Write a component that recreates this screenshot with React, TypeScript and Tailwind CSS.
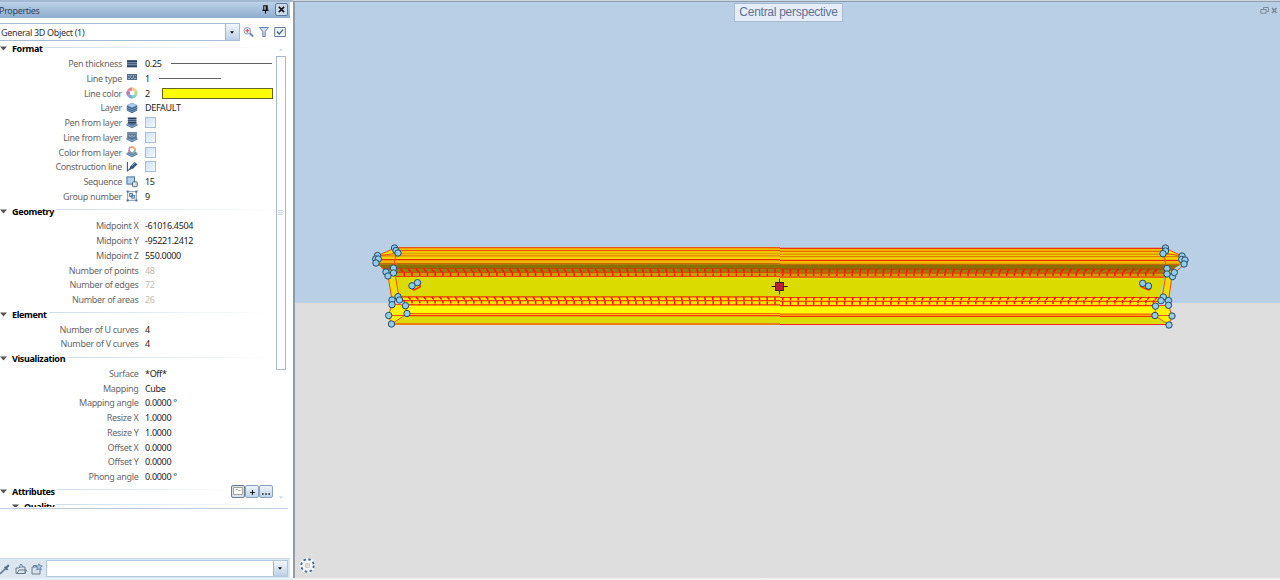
import React from "react";

type IconName =
  | "pen" | "type" | "wheel" | "layer" | "penLayer" | "lineLayer" | "colorLayer" | "construct" | "sequence" | "group";

type Row = {
  label: string;
  value?: string;
  icon?: IconName;
  kind?: "thick" | "thin" | "color" | "check" | "muted";
};

const format: Row[] = [
  { label: "Pen thickness", value: "0.25", icon: "pen", kind: "thick" },
  { label: "Line type", value: "1", icon: "type", kind: "thin" },
  { label: "Line color", value: "2", icon: "wheel", kind: "color" },
  { label: "Layer", value: "DEFAULT", icon: "layer" },
  { label: "Pen from layer", icon: "penLayer", kind: "check" },
  { label: "Line from layer", icon: "lineLayer", kind: "check" },
  { label: "Color from layer", icon: "colorLayer", kind: "check" },
  { label: "Construction line", icon: "construct", kind: "check" },
  { label: "Sequence", value: "15", icon: "sequence" },
  { label: "Group number", value: "9", icon: "group" },
];

const geometry: Row[] = [
  { label: "Midpoint X", value: "-61016.4504" },
  { label: "Midpoint Y", value: "-95221.2412" },
  { label: "Midpoint Z", value: "550.0000" },
  { label: "Number of points", value: "48", kind: "muted" },
  { label: "Number of edges", value: "72", kind: "muted" },
  { label: "Number of areas", value: "26", kind: "muted" },
];

const element: Row[] = [
  { label: "Number of U curves", value: "4" },
  { label: "Number of V curves", value: "4" },
];

const visualization: Row[] = [
  { label: "Surface", value: "*Off*" },
  { label: "Mapping", value: "Cube" },
  { label: "Mapping angle", value: "0.0000 °" },
  { label: "Resize X", value: "1.0000" },
  { label: "Resize Y", value: "1.0000" },
  { label: "Offset X", value: "0.0000" },
  { label: "Offset Y", value: "0.0000" },
  { label: "Phong angle", value: "0.0000 °" },
];

function LayerBase() {
  return (
    <>
      <path d="M.5 7 3 6H9l2.5 1V8.4L6 11.2.5 8.4Z" fill="#4f759f" />
      <path d="M1 7.4 6 9.6 11 7.4" fill="none" stroke="#a9c4e2" strokeWidth=".7" />
    </>
  );
}

function RowIcon({ name }: { name: IconName }) {
  return (
    <svg viewBox="0 0 12 12" className="h-3 w-3 shrink-0">
      {name === "pen" && (
        <>
          <rect x="1" y="2.2" width="10" height="7" fill="#8fa6c2" />
          <path d="M1 3.2h10M1 8.2h10" stroke="#2c4567" strokeWidth="2" />
          <path d="M1 5.7h10" stroke="#38557c" strokeWidth="1.3" />
        </>
      )}
      {name === "type" && (
        <>
          <rect x="1" y="2" width="10" height="6" fill="#526b90" />
          <path d="M2 3.6h1.5M4.5 3.6H6M7 3.6h1.2M9 3.6h1M2 6.4h2M5 6.4h2M8 6.4h2" stroke="#a9bdd8" strokeWidth=".9" />
          <path d="M4.2 4v2M7.4 4v2" stroke="#a9bdd6" strokeWidth=".7" />
        </>
      )}
      {name === "wheel" && (
        <>
          <g fill="none" strokeWidth="3.5">
            <path d="M6 2.1A3.9 3.9 0 0 1 9.4 4.05" stroke="#f0cf95" />
            <path d="M9.4 4.05A3.9 3.9 0 0 1 9.4 7.95" stroke="#b7dc91" />
            <path d="M9.4 7.95A3.9 3.9 0 0 1 6 9.9" stroke="#80d2c2" />
            <path d="M6 9.9A3.9 3.9 0 0 1 2.6 7.95" stroke="#8e9ddd" />
            <path d="M2.6 7.95A3.9 3.9 0 0 1 2.6 4.05" stroke="#b07bc6" />
            <path d="M2.6 4.05A3.9 3.9 0 0 1 6 2.1" stroke="#e58c9b" />
          </g>
          <circle cx="6.2" cy="6" r="2.2" fill="#fff" />
        </>
      )}
      {name === "layer" && (
        <>
          <path d="M.8 3.2 6 .8 11.2 3.2V8.5L6 11.2.8 8.5Z" fill="#41658f" />
          <path d="M.8 3.2 6 1 11.2 3.2 6 5.7Z" fill="#a9c9ec" />
          <path d="M1 5.4 6 7.7 11 5.4M1 7.6 6 9.8 11 7.6" fill="none" stroke="#86a9d0" strokeWidth=".7" />
        </>
      )}
      {name === "penLayer" && (
        <>
          <LayerBase />
          <rect x="2" y="1" width="8.4" height="5.5" fill="#8fa6c2" />
          <path d="M1.8 1.4h8.6M1.8 5.6h8.6" stroke="#253f5f" strokeWidth="1.7" />
          <path d="M1.8 3.6h8.6" stroke="#304d70" />
        </>
      )}
      {name === "lineLayer" && (
        <>
          <LayerBase />
          <rect x="1.2" y="1" width="9.6" height="6.8" fill="#5d7698" />
          <path d="M2 2.2h8M2.5 4.5h1.2v1.2h1.5V4.5h1.6v1.2h1.5V4.5h1" fill="none" stroke="#a9bcd6" strokeWidth=".7" />
        </>
      )}
      {name === "colorLayer" && (
        <>
          <LayerBase />
          <circle cx="6" cy="4" r="2.9" fill="#fff" stroke="#df8794" strokeWidth="1.5" />
          <path d="M6 1.1a2.9 2.9 0 0 1 2.9 2.9" fill="none" stroke="#dfba66" strokeWidth="1.5" />
          <path d="M8.9 4A2.9 2.9 0 0 1 6 6.9" fill="none" stroke="#81bd90" strokeWidth="1.5" />
          <path d="M6 6.9A2.9 2.9 0 0 1 3.1 4" fill="none" stroke="#a289cd" strokeWidth="1.5" />
        </>
      )}
      {name === "construct" && (
        <>
          <path d="M1.4 1v9.5M1 10 5.5 7" stroke="#43597a" strokeWidth="1.1" />
          <path d="M4.2 5.5 8.5 1 11.4 3.2 7 7.8 3.3 8.6Z" fill="#345684" />
          <path d="M6 5 9 2" stroke="#8eb4df" strokeWidth=".9" />
        </>
      )}
      {name === "sequence" && (
        <>
          <rect x=".9" y=".9" width="7.6" height="7.2" fill="#b4d2f0" stroke="#4c7199" />
          <rect x="6.5" y="5.8" width="4.7" height="4.9" rx=".8" fill="#dce2e8" stroke="#536a80" />
        </>
      )}
      {name === "group" && (
        <>
          <path d="M1.7 1.7h8.6v8.6H1.7Z" fill="none" stroke="#5b789d" strokeWidth=".8" />
          <path d="M.6.6h2v2h-2ZM9.4.6h2v2h-2ZM.6 9.4h2v2h-2ZM9.4 9.4h2v2h-2Z" fill="#506f98" />
          <path d="M3.5 3.5h3v3h-3ZM5.6 5.3h3v3h-3Z" fill="#bfd7ef" stroke="#3d5f8b" strokeWidth=".8" />
        </>
      )}
    </svg>
  );
}

function PropertyRow({ row }: { row: Row }) {
  return (
    <div className="flex h-[14.76px] shrink-0 items-center text-[#686868]">
      <span className={row.icon ? "w-[122px] text-right" : "w-[138.5px] text-right"}>{row.label}</span>
      {row.icon && <span className="ml-1 flex w-[12.5px]"><RowIcon name={row.icon} /></span>}
      {row.kind === "check" ? (
        <span className="ml-[6.5px] h-[11px] w-[11px] border border-[#a9bfd8] bg-linear-to-br from-[#d3e1f2] to-[#f2f8fe]" />
      ) : (
        <span className={row.kind === "muted" ? "ml-[6.5px] text-[#bcbcb6]" : "ml-[6.5px] text-[#222]"}>{row.value}</span>
      )}
      {row.kind === "thick" && <span className="mr-[2px] ml-[9px] h-px flex-1 bg-[#606060]" />}
      {row.kind === "thin" && <span className="ml-[9px] h-px w-[62px] bg-[#606060]" />}
      {row.kind === "color" && <span className="mr-[1px] ml-[12px] h-[11px] flex-1 border border-[#65652a] bg-[#ff0]" />}
    </div>
  );
}

function Heading({ title, children }: { title: string; children?: React.ReactNode }) {
  return (
    <div className="flex h-[14.76px] shrink-0 items-center">
      <svg viewBox="0 0 7 5" className="h-[5px] w-[7px]"><path d="M0 .5h7L3.5 4.5Z" fill="#555" /></svg>
      <span className="ml-[5px] font-bold tracking-[-0.34px] text-black">{title}</span>
      <span className="mb-[3px] ml-[2px] h-px flex-1 bg-linear-to-r from-[#cedde9] to-white" />
      {children}
    </div>
  );
}

function Section({ title, rows }: { title: string; rows: Row[] }) {
  return (
    <section className="flex shrink-0 flex-col">
      <Heading title={title} />
      {rows.map((r) => <PropertyRow key={r.label} row={r} />)}
    </section>
  );
}

function DropButton({ className }: { className: string }) {
  return (
    <span className={`flex items-center justify-center border-l border-[#9fb6d1] bg-linear-to-b from-[#f2f7fd] to-[#bdcfe5] ${className}`}>
      <svg viewBox="0 0 6 4" className="h-[3px] w-[4px]"><path d="M0 0h6L3 4Z" fill="#111" /></svg>
    </span>
  );
}

function Panel() {
  return (
    <aside className="flex w-[293px] shrink-0 flex-col bg-white font-['Noto_Sans',sans-serif] text-[9px] leading-none tracking-[-0.32px]">
      <div className="h-[2px] shrink-0 bg-[#a3b9d1]" />
      <header className="mr-[3px] flex h-[16px] shrink-0 items-center bg-linear-to-b from-[#bdd1e7] to-[#8dadcf] text-[#33475f]">
        <span className="-ml-px">Properties</span>
        <svg viewBox="0 0 8 10" className="mr-[6px] ml-auto mb-[2px] h-[9px] w-[7px]">
          <path d="M2 .8h4v5H2ZM.5 6h7M4 6v3.5" fill="none" stroke="#111" strokeWidth="1.2" />
          <path d="M5 1v5" stroke="#111" strokeWidth="1.5" />
        </svg>
        <span className="mr-[2px] mb-[2px] flex h-[13px] w-[13px] items-center justify-center rounded-[2px] border border-[#5e7a9b] bg-[#c9daeb]">
          <svg viewBox="0 0 8 8" className="h-[7px] w-[7px]"><path d="m1 1 6 6M7 1 1 7" stroke="#111" strokeWidth="1.8" /></svg>
        </span>
      </header>

      <div className="flex h-[23.6px] shrink-0 items-end pb-[0.6px]">
        <div className="flex h-[18px] w-[239.5px] border-y border-r border-[#a6bdd7] bg-white">
          <span className="flex flex-1 items-center pt-px pl-px text-[#333]">General 3D Object (1)</span>
          <DropButton className="w-[14px]" />
        </div>
        <div className="mb-[3.5px] ml-[3px] flex items-center gap-[4px]">
          <svg viewBox="0 0 12 12" className="h-[12px] w-[11px]">
            <circle cx="4.7" cy="4.7" r="3.6" fill="#fbe9ef" stroke="#8599b9" />
            <path d="M4.7 2.6v4.2M2.6 4.7h4.2" stroke="#d54b5c" strokeWidth="1.2" />
            <path d="m7.4 7.4 3.6 3.4" stroke="#7189b0" strokeWidth="2.2" />
          </svg>
          <svg viewBox="0 0 12 12" className="h-[12px] w-[12px]"><path d="M1.5 1.5h9L7.2 5.5v5H4.8v-5Z" fill="#d3e1f2" stroke="#6481a8" /></svg>
          <svg viewBox="0 0 12 12" className="h-[12px] w-[12px]"><path d="M.7 1.5h10.6v9H.7Z" fill="#edf3fa" stroke="#6b7f9b" /><path d="m3 5.5 2.2 2.6L9 3.7" fill="none" stroke="#435c80" strokeWidth="1.3" /></svg>
        </div>
      </div>

      <div className="flex h-[465.4px] shrink-0 overflow-hidden">
        <div className="flex w-[274px] shrink-0 flex-col">
          <Section title="Format" rows={format} />
          <Section title="Geometry" rows={geometry} />
          <Section title="Element" rows={element} />
          <Section title="Visualization" rows={visualization} />
          <Heading title="Attributes">
            <div className="mr-[1px] flex">
              <span className="flex h-[13px] w-[14px] items-center justify-center rounded-[2px] border border-[#697b91] bg-[#d9e1eb]">
                <svg viewBox="0 0 10 8" className="h-[8px] w-[10px]"><path d="M.5.5h9v7h-9Z" fill="#f7f7f5" stroke="#a7a39c" /><path d="M2.5 2.5h2l1 1h2" fill="none" stroke="#aaa" /></svg>
              </span>
              <span className="flex h-[13px] w-[14px] items-center justify-center rounded-[2px] border border-[#8ba3c1] bg-linear-to-b from-[#eef4fb] to-[#bfd3e9]">
                <svg viewBox="0 0 6 6" className="mt-[2px] h-[5px] w-[5px]"><path d="M3 0v6M0 3h6" stroke="#222" strokeWidth="1.3" /></svg>
              </span>
              <span className="flex h-[13px] w-[14px] items-end justify-center rounded-[2px] border border-[#8ba3c1] bg-linear-to-b from-[#eef4fb] to-[#bfd3e9]">
                <svg viewBox="0 0 8 4" className="h-[4px] w-[8px]"><path d="M0 1h1.6M3.2 1h1.6M6.4 1H8" stroke="#222" strokeWidth="1.6" /></svg>
              </span>
            </div>
          </Heading>
          <div className="pl-3"><Heading title="Quality" /></div>
        </div>
        <div className="flex w-[13px] shrink-0 flex-col items-center">
          <svg viewBox="0 0 6 4" className="mt-[6px] h-[3px] w-[4px]"><path d="M0 4h6L3 0Z" fill="#c9d7e8" /></svg>
          <div className="mt-[5px] flex h-[314px] w-[10px] flex-col items-center justify-center gap-px border border-[#aab8ca]">
            <span className="h-px w-[5px] bg-[#c3d3e7]" />
            <span className="h-px w-[5px] bg-[#c3d3e7]" />
            <span className="h-px w-[5px] bg-[#c3d3e7]" />
          </div>
          <svg viewBox="0 0 6 4" className="mt-auto mb-[8px] h-[3px] w-[4px]"><path d="M0 0h6L3 4Z" fill="#c9d7e8" /></svg>
        </div>
      </div>
      <div className="mt-px mr-[5px] h-px shrink-0 bg-[#bdcddd]" />
      <footer className="mt-auto mr-[3px] flex h-[20px] shrink-0 items-center border-t border-[#ccd9e7] bg-[#dce6f1]">
        <svg viewBox="0 0 12 12" className="-ml-px h-[12px] w-[12px]"><path d="M1 11 6.7 5.3" stroke="#6d8199" strokeWidth="1.7" /><path d="m5.6 3.8 3 3M7 5l2.8-3" stroke="#536d8b" strokeWidth="1.9" /></svg>
        <svg viewBox="0 0 12 12" className="ml-[4px] h-[12px] w-[12px]"><path d="M1 5h3l1-1h5v6.5H1ZM2 10.5 4 7h7.5L10 10.5" fill="#e0e8ef" stroke="#68798c" /><path d="M4 4 6 1l2.5 3" fill="#acc5df" stroke="#7089a5" /></svg>
        <svg viewBox="0 0 12 12" className="ml-[4px] h-[12px] w-[12px]"><path d="M1 4h8v7H1ZM2.5 4V2.5h3V4" fill="#d6e1eb" stroke="#6c7d90" /><path d="m8 .8 1 2 2.3.1-1.7 1.7.6 2.4L8 5.8 5.8 7l.6-2.4-1.7-1.7L7 2.8Z" fill="#a4c7ec" stroke="#55799f" strokeWidth=".8" /></svg>
        <div className="ml-[2.5px] flex h-[17px] flex-1 border border-[#b2c8df] bg-white">
          <span className="flex-1" />
          <DropButton className="w-[14px]" />
        </div>
        <div className="w-[2.5px]" />
      </footer>
      <div className="h-[2px] shrink-0 bg-[#e9eff6]" />
    </aside>
  );
}

const leftNodes = [
  [394.5, 248], [396, 250.5], [398, 253], [377.5, 255.5], [375.7, 259], [378.3, 259], [376, 263],
  [393.5, 268], [386, 272], [393.5, 273], [388, 276], [412, 285.8], [417.5, 282.7],
  [398, 296.7], [392, 300], [399.5, 300], [392, 304.7], [405.5, 305.7], [407, 313.5], [388.7, 315.5], [391.5, 324],
];
const rightNodes = [
  [1165.5, 248], [1165.5, 251], [1163, 253.7], [1182, 256], [1181.7, 259.5], [1185, 260], [1184, 264],
  [1167, 268.5], [1172.5, 276.5], [1174.3, 272.5], [1167, 274], [1142.7, 283.3], [1148.5, 286],
  [1163.3, 297], [1168.5, 300.5], [1161, 300.7], [1168.5, 305.3], [1155.5, 306.2], [1155, 315.5], [1172, 316], [1169, 325],
];

type Band = { y: number; h: number; fill: string };
const bands: Band[] = [
  { y: 247, h: 6, fill: "#f0c400" },
  { y: 253, h: 6, fill: "#f4d400" },
  { y: 259, h: 5, fill: "#f0b800" },
  { y: 264, h: 5, fill: "#887000" },
  { y: 269, h: 3, fill: "#a37800" },
  { y: 272, h: 4, fill: "#cc9f00" },
  { y: 276, h: 21, fill: "#dbdb00" },
  { y: 297, h: 8, fill: "#f2e700" },
  { y: 305, h: 8, fill: "#ffff00" },
  { y: 313, h: 3, fill: "#ffd000" },
  { y: 316, h: 9, fill: "#dbdb00" },
];
const edges: [number, string][] = [
  [247.5, "#f02c10"], [250.3, "#ee5000"], [253.5, "#e09000"], [255.7, "#e07c00"], [259.5, "#ee3000"],
  [263.5, "#c86800"], [268.3, "#b84b00"], [272.3, "#d94800"], [276.3, "#fb3a00"], [296.6, "#f53000"],
  [300.4, "#fa4000"], [304.7, "#ff2500"], [313.3, "#f56100"], [315.5, "#f83000"], [323.8, "#ff2420"],
];

const ticks = Array.from({ length: 98 }, (_, i) => 403 + i * 7.75);

function Half({ x, width, dy }: { x: number; width: number; dy: number }) {
  return (
    <g transform={`translate(0 ${dy})`}>
      {bands.map((b) => <rect key={b.y} x={x} y={b.y} width={width} height={b.h + 0.5} fill={b.fill} />)}
      {edges.map(([y, c]) => <path key={y} d={`M${x} ${y}h${width}`} stroke={c} strokeWidth="1.15" />)}
    </g>
  );
}

function Beam() {
  return (
    <svg viewBox="295 2 985 576" className="h-[576px] w-[985px]" fill="none">
      <defs>
        <clipPath id="body">
          <path d="M396 247H1165L1182 258 1181 264 1169 272 1165 276 1159 300 1155 305V315L1169 325H391L407 315V305L400 299 394 275 387 272 377 263 377 257Z" />
        </clipPath>
      </defs>
      <g clipPath="url(#body)">
        <Half x={375} width={405} dy={0.2} />
        <Half x={780} width={405} dy={0.9} />
        {ticks.filter((x) => x < 1161).map((x, i) => {
          const s = (780 - x) / 380;
          const k = -s * 2.6;
          return (
            <g key={i} stroke="#f51200">
              <path d={`M${x + k} 269 ${x - k * 0.5} 273V276`} strokeWidth="1.5" strokeDasharray="4 .7" />
              <path d={`M${x + k} 297 ${x - k * 0.5} 301V305`} strokeWidth="1.5" strokeDasharray="3.4 1" />
            </g>
          );
        })}
      </g>
      <g stroke="#f24b12" strokeWidth="1" strokeLinejoin="round">
        <path d="M395 248 377 256 398 253Z" fill="#ffe600" />
        <path d="M386 272 388 276 392 300 399 297 394 268Z" fill="#eedf00" />
        <path d="M393 273 396 253M377 263 387 273" />
        <path d="M392 304 405 305 407 314 391.5 324 388.5 315.5Z" fill="#fff200" />
        <path d="M388.5 315.5h18" />
        <path d="M1165 248 1182 256 1163 253Z" fill="#ffe600" />
        <path d="M1174 272 1172 276 1168.5 301 1162 298 1167 268Z" fill="#eedf00" />
        <path d="M1167 274 1164 253M1184 264 1174 274" />
        <path d="M1168.5 305 1155.5 306 1155 315.5 1169 325 1172 316Z" fill="#fff200" />
        <path d="M1155 315.5h17" />
        <path d="m410 287 4 3 6-3v-5M1140 286l4 2 5 2 2-2" stroke="#e33a00" strokeWidth="1.6" />
      </g>
      <g fill="#93cbed" stroke="#244b68" strokeWidth="1">
        {[...leftNodes, ...rightNodes].map(([x, y], i) => <circle key={i} cx={x} cy={y} r="3.2" />)}
      </g>
      <path d="M771.7 286.5h16M779.5 278.5v16" stroke="#242a10" />
      <rect x="775.5" y="282.5" width="8" height="8" fill="#b91f36" stroke="#3f2218" />
      <circle cx="307.5" cy="565.5" r="7.8" fill="#f3f5f6" />
      <circle cx="307.5" cy="565.5" r="6.3" stroke="#496d91" strokeWidth="1.8" strokeDasharray="2.6 2.35" />
      <path d="M305.5 563.5h4v4h-4Z" fill="#ddd" stroke="#c8c7bc" strokeWidth=".7" />
    </svg>
  );
}

export default function App() {
  return (
    <main className="flex h-[580px] w-[1280px] overflow-hidden bg-white">
      <Panel />
      <div className="relative flex min-w-0 flex-1 flex-col">
        <div className="h-px shrink-0 bg-[#c9d6e3]" />
        <div className="flex h-[577px] shrink-0 border-t border-l-2 border-[#929ca8] bg-linear-to-b from-[#b9cfe6] from-[301.5px] to-[#dedede] to-[301.5px]">
          <Beam />
        </div>
        <div className="h-[2px] shrink-0 bg-[#f1f1f1]" />
        <span className="absolute top-[3px] left-[441px] flex h-[18.5px] w-[109px] items-center justify-center border border-[#a9bad0] bg-[#e6edfa] font-['Liberation_Sans',sans-serif] text-[12px] tracking-[-0.27px] text-[#5b7194]">Central perspective</span>
        <svg viewBox="0 0 20 9" className="absolute top-[6px] right-0 h-[9px] w-[20px]" fill="none" stroke="#7e8a97">
          <path d="M3.5 3V1.5h5v4H7M.8 3.5h5.4v3.7H.8Z" />
          <path d="m12 2 4.5 5M16.5 2 12 7" strokeWidth="1.7" />
        </svg>
      </div>
    </main>
  );
}
